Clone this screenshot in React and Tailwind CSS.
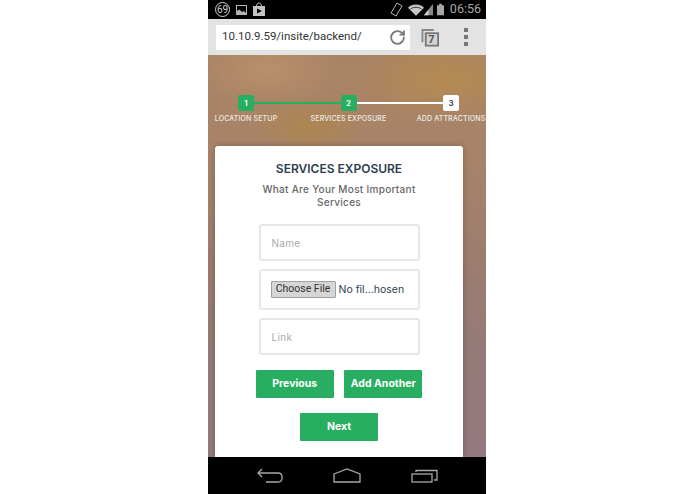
import { RotateCw } from "lucide-react";

const heading = "font-['Inter',sans-serif]";

function StatusBar() {
  return (
    <div className="flex h-[19px] items-center justify-between bg-black pl-[7px] pr-[5px] text-[#b4b4b4]">
      <div className="flex items-center gap-[6px]">
        <span className="flex h-[15px] w-[15px] items-center justify-center rounded-full border border-[#d0d0d0] font-['Roboto',sans-serif] text-[10px] leading-none text-[#d0d0d0]">
          69
        </span>
        <svg width="11" height="10" viewBox="0 0 11 10">
          <rect x="0.5" y="0.5" width="10" height="9" fill="none" stroke="#b4b4b4" />
          <path d="M1 9 L1 6 L3.5 4.5 L6 7 L8 6 L10 8 L10 9 Z" fill="#b4b4b4" />
        </svg>
        <svg width="12" height="14" viewBox="0 0 12 14" className="-mt-[2px]">
          <path d="M0 4 H12 V14 H0 Z" fill="#c4c4c4" />
          <path d="M3.5 4 C3.5 0 8.5 0 8.5 4" fill="none" stroke="#c4c4c4" />
          <path d="M4 6.5 L9 9 L4 11.5 Z" fill="#000" />
        </svg>
      </div>
      <div className="flex items-center">
        <svg width="13" height="15" viewBox="0 0 13 15" className="mr-[5px]">
          <path d="M7 1 L12 4 L6 14 L1 11 Z" fill="none" stroke="#b4b4b4" strokeWidth="1" />
        </svg>
        <svg width="16" height="12" viewBox="0 0 17 12">
          <path d="M0 3.5 C4.5 -1 12.5 -1 17 3.5 L8.5 12 Z" fill="#c8c8c8" />
          <path d="M2.6 5 C6 2.4 11 2.4 14.4 5" fill="none" stroke="#000" strokeWidth="0.8" />
        </svg>
        <svg width="9" height="13" viewBox="0 0 10 13">
          <path d="M10 0 V13 H0 Z" fill="#8a8a8a" />
          <path d="M5 6.5 V13 H0 Z" fill="#d0d0d0" />
        </svg>
        <svg width="7" height="13" viewBox="0 0 8 13" className="ml-[4px]">
          <path d="M2.5 0 H5.5 V1.5 H8 V13 H0 V1.5 H2.5 Z" fill="#a8a8a8" />
        </svg>
        <span className="ml-[6px] font-['Roboto',sans-serif] text-[12.5px] leading-none text-[#a8a8a8]">06:56</span>
      </div>
    </div>
  );
}

function BrowserBar() {
  return (
    <div className="flex h-[36px] items-center bg-[#e3e3e3] pl-[8px]">
      <div className="flex h-[25px] w-[194px] items-center justify-between rounded-[1px] bg-white pl-[6px] pr-[4px]">
        <span className="font-['Roboto',sans-serif] text-[11.5px] leading-none text-[#333]">10.10.9.59/insite/backend/</span>
        <RotateCw className="h-[17px] w-[17px] text-[#777]" strokeWidth={2.6} />
      </div>
      <svg width="19" height="18" viewBox="0 0 19 19" className="ml-[11px] mt-[1px]">
        <path d="M1 14 V1 H13" fill="none" stroke="#888" strokeWidth="2" />
        <rect x="4.5" y="4.5" width="13" height="13" fill="none" stroke="#777" strokeWidth="2" />
        <rect x="6" y="6" width="10" height="10" fill="#d2d2d2" />
      </svg>
      <span className="relative -ml-[13px] mt-[4px] w-[9px] text-center font-['Roboto',sans-serif] text-[11px] font-bold leading-none text-[#555]">7</span>
      <div className="ml-[28px] flex flex-col gap-[3px]">
        <span className="h-[4px] w-[4px] bg-[#777]" />
        <span className="h-[4px] w-[4px] bg-[#777]" />
        <span className="h-[4px] w-[4px] bg-[#777]" />
      </div>
    </div>
  );
}

function Step({ n, label, done, line }) {
  return (
    <div className="relative flex w-[76px] shrink-0 flex-col items-center">
      {line && <span className={"absolute left-1/2 top-[7px] h-[2px] w-[102px] " + line} />}
      <span
        className={
          "relative flex h-[16px] w-[16px] items-center justify-center rounded-[2px] text-[8px] font-semibold " +
          (done ? "bg-[#27ae60] text-white" : "bg-white text-[#2c3e50]")
        }
      >
        {n}
      </span>
      <span className="mt-[3px] whitespace-nowrap text-[7px] font-medium leading-[10px] tracking-[0.15px] text-[#f0ebe4]">{label}</span>
    </div>
  );
}

function Field({ placeholder }) {
  return (
    <input
      placeholder={placeholder}
      className="h-[37px] w-[161px] rounded-[3px] border-2 border-[#e6e6e6] bg-white px-[11px] text-[10px] tracking-[0.3px] outline-none placeholder:text-[#a9a9a9]"
    />
  );
}

function GreenButton({ children }) {
  return (
    <button type="button" className="h-[28px] w-[78px] whitespace-nowrap rounded-[1px] bg-[#27ae60] text-[10.5px] font-bold text-white">
      {children}
    </button>
  );
}

export default function App() {
  return (
    <div className={"h-[494px] w-[695px] overflow-hidden bg-white pl-[208px] " + heading}>
      <div className="flex h-[494px] w-[278px] flex-col overflow-hidden">
        <StatusBar />
        <BrowserBar />
        <main className="flex min-h-0 flex-1 flex-col overflow-hidden bg-[radial-gradient(ellipse_90px_40px_at_235px_25px,#b58a50_0%,transparent_100%),radial-gradient(ellipse_70px_35px_at_60px_15px,#b8906a_0%,transparent_100%),radial-gradient(ellipse_60px_30px_at_100px_70px,#ad8650_0%,transparent_100%),linear-gradient(180deg,#a98464_0%,#a7836a_25%,#9d7d6e_50%,#947a78_75%,#95797f_100%)] pt-[40px]">
          <div className="flex gap-[26.5px] overflow-hidden">
            <Step n="1" label="LOCATION SETUP" done line="bg-[#27ae60]" />
            <Step n="2" label="SERVICES EXPOSURE" done line="bg-white" />
            <Step n="3" label="ADD ATTRACTIONS" />
          </div>
          <section className="ml-[7px] mt-[22px] flex h-[311px] w-[248px] flex-col items-center rounded-t-[3px] bg-white pt-[16px] shadow-[0_0_6px_rgba(60,40,30,0.35)]">
            <h1 className="text-[12px] font-semibold leading-[14px] text-[#2c3e50]">SERVICES EXPOSURE</h1>
            <p className="mt-[7px] w-[190px] text-center text-[10px] font-medium leading-[12.5px] tracking-[0.3px] text-[#666]">
              What Are Your Most Important Services
            </p>
            <div className="mt-[16px] flex flex-col gap-[8px]">
              <Field placeholder="Name" />
              <div className="flex h-[41px] w-[161px] items-center rounded-[3px] border-2 border-[#e8e8e8] pl-[10px]">
                <button
                  type="button"
                  className="h-[17px] w-[65px] rounded-[1px] border border-[#a0a0a0] bg-[#d6d6d6] font-['Roboto',sans-serif] text-[10.5px] leading-none text-[#333]"
                >
                  Choose File
                </button>
                <span className="ml-[3px] text-[10.5px] text-[#2c3e50]">No fil...hosen</span>
              </div>
              <Field placeholder="Link" />
            </div>
            <div className="mt-[15px] flex gap-[10.5px]">
              <GreenButton>Previous</GreenButton>
              <GreenButton>Add Another</GreenButton>
            </div>
            <div className="mt-[14px]">
              <GreenButton>Next</GreenButton>
            </div>
          </section>
        </main>
        <nav className="flex h-[37px] items-center bg-black pl-[49px]">
          <svg width="26" height="15" viewBox="0 0 26 15" fill="none" stroke="#a8a8a8" strokeWidth="1.3">
            <path d="M5 1 L1 5 L5 9" />
            <path d="M1 5 H21 Q25 5 25 9 V10 Q25 14 21 14 H9" />
          </svg>
          <svg width="28" height="15" viewBox="0 0 28 15" fill="none" stroke="#a8a8a8" strokeWidth="1.3" className="ml-[50px]">
            <path d="M1 6 L14 1 L27 6 V14 H1 Z" />
          </svg>
          <svg width="27" height="14" viewBox="0 0 27 14" fill="none" stroke="#a8a8a8" strokeWidth="1.3" className="ml-[50px]">
            <rect x="1" y="5" width="20" height="8" />
            <path d="M5 3 V1.5 H26 V11 H23" />
          </svg>
        </nav>
      </div>
    </div>
  );
}
